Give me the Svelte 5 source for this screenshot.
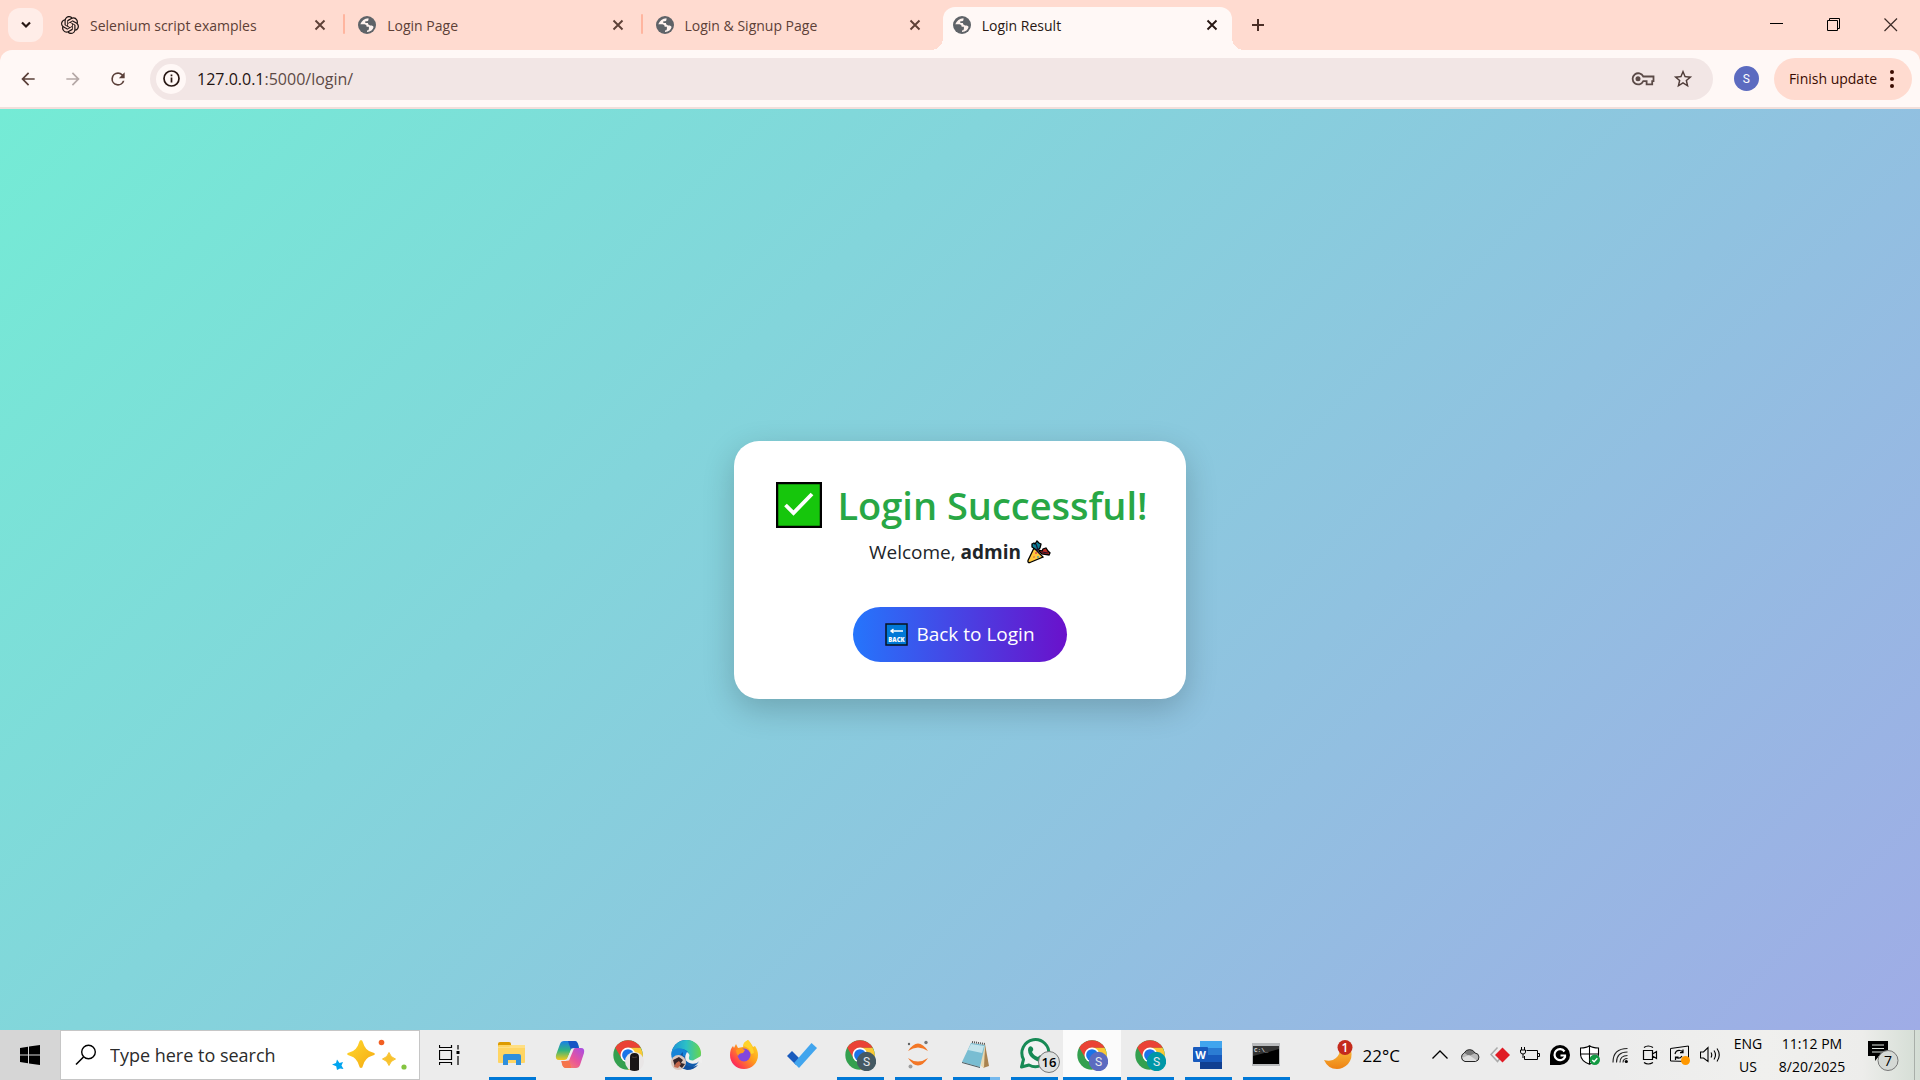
<script>
  const tabs = [
    { title: 'Selenium script examples', icon: 'knot' },
    { title: 'Login Page', icon: 'globe', sep: true },
    { title: 'Login & Signup Page', icon: 'globe', sep: true },
    { title: 'Login Result', icon: 'globe', active: true },
  ];
  const apps = [
    { name: 'File Explorer', art: 'folder', open: true },
    { name: 'Copilot', art: 'copilot' },
    { name: 'Chrome, work profile', art: 'chrome', open: true, badge: 'photo' },
    { name: 'Edge', art: 'edge' },
    { name: 'Firefox', art: 'firefox' },
    { name: 'To Do', art: 'todo' },
    { name: 'Chrome, profile 1', art: 'chrome', open: true, badge: '#455a64' },
    { name: 'Jupyter', art: 'jupyter', open: true },
    { name: 'Notepad', art: 'notepad', open: true, stacked: true },
    { name: 'WhatsApp', art: 'whatsapp', open: true },
    { name: 'Chrome, profile 2', art: 'chrome', open: true, current: true, badge: '#5c6bc0' },
    { name: 'Chrome, profile 3', art: 'chrome', open: true, badge: '#0097a7' },
    { name: 'Word', art: 'word', open: true },
    { name: 'Command Prompt', art: 'cmd', open: true },
  ];
</script>

{#snippet cross()}
  <svg width="12" height="12" viewBox="0 0 12 12"><path d="M1.5 1.5l9 9M10.5 1.5l-9 9" fill="none" stroke="currentColor" stroke-width="1.9" /></svg>
{/snippet}

{#snippet favicon(kind)}
  {#if kind === 'knot'}
    <svg width="18" height="18" viewBox="0 0 24 24" fill="#1b1312"><path d="M22.2819 9.8211a5.9847 5.9847 0 0 0-.5157-4.9108 6.0462 6.0462 0 0 0-6.5098-2.9A6.0651 6.0651 0 0 0 4.9807 4.1818a5.9847 5.9847 0 0 0-3.9977 2.9 6.0462 6.0462 0 0 0 .7427 7.0966 5.98 5.98 0 0 0 .511 4.9107 6.051 6.051 0 0 0 6.5146 2.9001A5.9847 5.9847 0 0 0 13.2599 24a6.0557 6.0557 0 0 0 5.7718-4.2058 5.9894 5.9894 0 0 0 3.9977-2.9001 6.0557 6.0557 0 0 0-.7475-7.0729zm-9.022 12.6081a4.4755 4.4755 0 0 1-2.8764-1.0408l.1419-.0804 4.7783-2.7582a.7948.7948 0 0 0 .3927-.6813v-6.7369l2.02 1.1686a.071.071 0 0 1 .038.052v5.5826a4.504 4.504 0 0 1-4.4945 4.4944zm-9.6607-4.1254a4.4708 4.4708 0 0 1-.5346-3.0137l.142.0852 4.783 2.7582a.7712.7712 0 0 0 .7806 0l5.8428-3.3685v2.3324a.0804.0804 0 0 1-.0332.0615L9.74 19.9502a4.4992 4.4992 0 0 1-6.1408-1.6464zM2.3408 7.8956a4.485 4.485 0 0 1 2.3655-1.9728V11.6a.7664.7664 0 0 0 .3879.6765l5.8144 3.3543-2.0201 1.1685a.0757.0757 0 0 1-.071 0l-4.8303-2.7865A4.504 4.504 0 0 1 2.3408 7.872zm16.5963 3.8558L13.1038 8.364 15.1192 7.2a.0757.0757 0 0 1 .071 0l4.8303 2.7913a4.4944 4.4944 0 0 1-.6765 8.1042v-5.6772a.79.79 0 0 0-.407-.667zm2.0107-3.0231l-.142-.0852-4.7735-2.7818a.7759.7759 0 0 0-.7854 0L9.409 9.2297V6.8974a.0662.0662 0 0 1 .0284-.0615l4.8303-2.7866a4.4992 4.4992 0 0 1 6.6802 4.66zM8.3065 12.863l-2.02-1.1638a.0804.0804 0 0 1-.038-.0567V6.0742a4.4992 4.4992 0 0 1 7.3757-3.4537l-.142.0805L8.704 5.459a.7948.7948 0 0 0-.3927.6813zm1.0976-2.3654l2.602-1.4998 2.6069 1.4998v2.9994l-2.5974 1.4997-2.6067-1.4997Z" /></svg>
  {:else}
    <svg width="18" height="18" viewBox="0 0 18 18"><circle cx="9" cy="9" r="9" fill="#5f6368" /><path d="M10.500 2.200Q4.300 2.800 2.300 8.300h4.200q2.300.2 2.200 2.400h2.200v2.200q-.1 1.500-1.900 1.600v1.500q5.500-.4 6.800-5.500-1.300-.5-1.800-1.600h-2.500q-1.600-.2-1.600-2H7.300V5.200h1.800q1.400-.2 1.400-1.700z" fill="#fff3ef" /><path d="M14.500 5.200q2 2.500 1.500 5.800l-1.500-1.500h-3z" fill="#5f6368" /></svg>
  {/if}
{/snippet}

{#snippet chrome(badge)}
  <svg width="32" height="32" viewBox="0 0 32 32">
    <g transform="translate(1 1) scale(.625)">
      <circle cx="24" cy="24" r="23.500" fill="#34a04f" />
      <path d="M43.700 11.800A23 23 0 0 1 24 47.500L34.200 30 24 12z" fill="#fcc934" />
      <path d="M3.700 12.200A23.500 23.500 0 0 1 44.300 12.200H24L14 30z" fill="#ea4335" />
      <circle cx="24" cy="24" r="12" fill="#fff" />
      <circle cx="24" cy="24" r="9.400" fill="#1a73e8" />
    </g>
    {#if badge === 'photo'}
      <circle cx="22.500" cy="22.500" r="9.500" fill="#e9e6e6" />
      <path d="M18 18q0-4 4.500-4t4.500 4v13q-4.500 2-9 0z" fill="#191516" />
      <path d="M20 18q2 1 5 0" stroke="#4b3f3d" fill="none" />
    {:else}
      <circle cx="22.500" cy="22.500" r="9.700" fill={badge} />
      <text x="22.500" y="27" text-anchor="middle" font-family="Roboto, sans-serif" font-size="12" fill="#e6e9ee">S</text>
    {/if}
  </svg>
{/snippet}

{#snippet appArt(app)}
  {#if app.art === 'chrome'}
    {@render chrome(app.badge)}
  {:else if app.art === 'folder'}
    <svg width="32" height="32" viewBox="0 0 32 32">
      <path d="M2 5q0-2 2-2h9q2 0 2 2v4H2z" fill="#dd9b00" /><rect x="2" y="6" width="27" height="18" rx="1" fill="#ffd563" /><path d="M2 8h11l3-2h13v3H2z" fill="#ffdf83" />
      <path d="M7 26V17q0-2 2-2h14q2 0 2 2v9h-5v-5h-8v5z" fill="#2f8fdd" />
    </svg>
  {:else if app.art === 'copilot'}
    <svg width="32" height="32" viewBox="0 0 32 32">
      <defs>
        <linearGradient id="cpA" x1="0" y1="0" x2="0" y2="1"><stop offset="0" stop-color="#1a7fe8" /><stop offset=".5" stop-color="#31b57e" /><stop offset="1" stop-color="#f4c81c" /></linearGradient>
        <linearGradient id="cpB" x1="1" y1="0" x2="0" y2="1"><stop offset="0" stop-color="#a44de8" /><stop offset=".5" stop-color="#e8559b" /><stop offset="1" stop-color="#ff9357" /></linearGradient>
      </defs>
      <path d="M17 2h4q2 0 3 3l1 4h-5q-2 0-3 2l-3 7q-1 3-4 3H5q-4 0-3-5L6 5q1-3 4-3z" fill="url(#cpA)" />
      <path d="M15 29h-3q-3 0-4-4l-1-3h5q2 0 3-2l3-8q1-3 4-3h5q4 0 3 5l-4 12q-1 3-4 3z" fill="url(#cpB)" />
      <path d="M14 2h7q2 0 3 3l1 4h-5q-2 0-3 2z" fill="#1554c4" /><path d="M8 22h4q2 0 3-2l2 9h-5q-3 0-4-4z" fill="#f5744c" />
      <path d="M17.500 9.500h2.500l-5 12h-2.500z" fill="#ececec" />
    </svg>
  {:else if app.art === 'edge'}
    <svg width="32" height="32" viewBox="0 0 32 32">
      <defs>
        <linearGradient id="edA" x1="0" y1="0" x2="1" y2="0"><stop offset="0" stop-color="#1c93d6" /><stop offset=".5" stop-color="#2cc0c6" /><stop offset="1" stop-color="#68d64c" /></linearGradient>
      </defs>
      <circle cx="16" cy="15.500" r="14.500" fill="#0f5cae" />
      <path d="M1.500 15C2 7 8.500 1 16.500 1 25 1 31 7.500 31 14c0 5-3.500 8-8 8-4 0-6-2-5-3.500 1.600-2.300 1-6.500-4-8C9 9 3 11 1.500 15z" fill="url(#edA)" />
      <path d="M1.500 15C3 9.500 9 8.500 13 10c5 1.700 6 6 4 8.500l-4-2-5 3-6 1z" fill="#1684d8" />
      <path d="M17 13q-5 9 4 11.500 5 1 8-2l3 2v-8l-9 5q-5 0-4-3.500 1.500-2.500-2-5z" fill="#efefef" />
      <path d="M13 13q-2 10 5 14 5 2 10-1-4 5-11 5-8-2-8-10 0-5 4-8z" fill="#104f9e" />
      <circle cx="8.500" cy="23.500" r="7.500" fill="#dcc6bc" /><path d="M3 21l6-3 4 3-2 3 4 1-3 4-4-3-3 2z" fill="#36262a" /><path d="M6 24l3-2 2 3-3 4-4-1z" fill="#c4664a" />
    </svg>
  {:else if app.art === 'firefox'}
    <svg width="32" height="32" viewBox="0 0 32 32">
      <defs>
        <linearGradient id="ffA" x1="1" y1="0" x2="0" y2="1"><stop offset="0" stop-color="#ffe226" /><stop offset=".45" stop-color="#ff9b1c" /><stop offset=".8" stop-color="#ff3750" /><stop offset="1" stop-color="#e31587" /></linearGradient>
      </defs>
      <path d="M20 1c3 3 4 5 5 7l2-1c2 3 3 6 3 9 0 8-6 14-14 14S2 24 2 16c0-4 1-7 3-9l1 2 2-4 2 4 5-1q2-5 5-7z" fill="url(#ffA)" />
      <circle cx="16" cy="16" r="6.500" fill="#8247dd" /><path d="M8 11q5-3 9 0l-2 3q-4 0-5 3-2-3-2-6z" fill="#ff9a1f" /><path d="M15 7q7 1 8 8l3-1q-1-7-6-13-5 2-5 6z" fill="#ffd32c" />
    </svg>
  {:else if app.art === 'todo'}
    <svg width="32" height="32" viewBox="0 0 32 32"><path d="M1 17l5-5 9 9-5 5z" fill="#185abd" /><path d="M8 24L25.500 4l5.500 5-18 20z" fill="#41a5ee" /></svg>
  {:else if app.art === 'jupyter'}
    <svg width="32" height="32" viewBox="0 0 32 32">
      <path d="M6 12q10-15 20 0-10-7-20 0zM6 19q10 15 20 0-10 7-20 0z" fill="#f37726" />
      <circle cx="24" cy="3.500" r="1.700" fill="#767677" /><circle cx="7" cy="5" r="1.200" fill="#616262" /><circle cx="8.500" cy="27.500" r="2" fill="#9e9e9e" />
    </svg>
  {:else if app.art === 'notepad'}
    <svg width="32" height="32" viewBox="0 0 32 32">
      <path d="M25 5l4 22-6 2z" fill="#a98350" /><path d="M22 6l3-1-1 24-3-2z" fill="#e9d8b0" />
      <path d="M11 4l14 2-5 22-18-5z" fill="#79bdd2" /><path d="M11 5l13 2-2 7-14-3z" fill="#c3e4ec" /><path d="M12 3l13 2" stroke="#555" stroke-width="2" stroke-dasharray="1 1" />
      <path d="M2 23l18 5v1L2 24z" fill="#4a5a60" />
    </svg>
  {:else if app.art === 'whatsapp'}
    <svg class="wide" width="46" height="36" viewBox="0 0 46 36">
      <path d="M4.500 30l2-7.500A13.500 13.500 0 1 1 12 28z" fill="#f3f3f3" stroke="#178a55" stroke-width="3" stroke-linejoin="round" />
      <path d="M12 10q2-2 4 1 1 2-1 4 2 4 6 5 2-3 4-1 3 1 1 4-3 3-8 0-7-4-7-10 0-2 1-3z" fill="#178a55" />
      <circle cx="32" cy="25" r="10.500" fill="#dfe2e1" stroke="#777" />
      <text x="32" y="30" text-anchor="middle" font-family="Open Sans, sans-serif" font-size="13" font-weight="600" fill="#000">16</text>
    </svg>
  {:else if app.art === 'word'}
    <svg width="32" height="32" viewBox="0 0 32 32">
      <path d="M8 2h22v7H8z" fill="#41a5ee" /><path d="M8 9h22v7H8z" fill="#2b7cd3" /><path d="M8 16h22v7H8z" fill="#185abd" /><path d="M8 23h22v7H8z" fill="#103f91" />
      <rect x="1" y="8" width="15" height="15" rx="1" fill="#185abd" />
      <text x="8.500" y="20" text-anchor="middle" font-family="Open Sans, sans-serif" font-size="11" font-weight="700" fill="#fff">W</text>
    </svg>
  {:else if app.art === 'cmd'}
    <svg width="32" height="32" viewBox="0 0 32 32">
      <rect x="2" y="4" width="28" height="23" fill="#b9bbbd" /><rect x="3" y="7" width="26" height="18" fill="#000" /><path d="M3 17l26-7v-3H3z" fill="#333" />
      <text x="4" y="13" font-family="Liberation Mono, monospace" font-size="6" font-weight="700" fill="#ddd">C:\_</text>
    </svg>
  {/if}
{/snippet}

<div class="screen">
  <header>
    <div class="strip">
      <button class="tabsearch" aria-label="Search tabs"><svg width="14" height="14" viewBox="0 0 14 14"><path d="M3 4.500l4 4 4-4" fill="none" stroke="#281713" stroke-width="2.200" /></svg></button>
      <nav class="tabs" aria-label="Tabs">
        {#each tabs as tab}
          <div class="tab" class:active={tab.active} class:sep={tab.sep}>
            {@render favicon(tab.icon)}
            <button class="title">{tab.title}</button>
            <button class="close" aria-label={`Close ${tab.title}`}>{@render cross()}</button>
          </div>
        {/each}
      </nav>
      <button class="newtab" aria-label="New tab"><svg width="14" height="14" viewBox="0 0 14 14"><path d="M7 1v12M1 7h12" stroke="#4b2f27" stroke-width="2" /></svg></button>
      <div class="window">
        <button aria-label="Minimize"><svg width="14" height="14" viewBox="0 0 14 14"><path d="M0 5.500h13" stroke="#000" /></svg></button>
        <button aria-label="Restore"><svg width="14" height="14" viewBox="0 0 14 14"><path d="M.5 2.500h10v10H.5zM2.500 2V.500h10v10H11" fill="none" stroke="#000" /></svg></button>
        <button aria-label="Close window"><svg width="14" height="14" viewBox="0 0 14 14"><path d="M.5.500l12.500 12.500M13 .500l-12.500 12.500" stroke="#3c2b27" stroke-width="1.200" /></svg></button>
      </div>
    </div>
    <div class="toolbar">
      <button class="nav" aria-label="Back"><svg width="20" height="20" viewBox="0 0 24 24"><path d="M20 11H7.830l5.590-5.590L12 4l-8 8 8 8 1.410-1.410L7.830 13H20z" fill="#5b4039" /></svg></button>
      <button class="nav" aria-label="Forward" disabled><svg width="20" height="20" viewBox="0 0 24 24"><path d="M12 4l-1.410 1.410L16.170 11H4v2h12.170l-5.580 5.590L12 20l8-8z" fill="#b5a8a6" /></svg></button>
      <button class="nav" aria-label="Reload"><svg width="20" height="20" viewBox="0 0 24 24"><path d="M17.650 6.350A7.960 7.960 0 0 0 12 4a8 8 0 1 0 7.730 10h-2.080A6 6 0 1 1 12 6c1.660 0 3.140.69 4.220 1.780L13 11h7V4z" fill="#5b4039" /></svg></button>
      <form class="omni">
        <button type="button" class="info" aria-label="Site information"><svg width="17" height="17" viewBox="0 0 17 17"><circle cx="8.500" cy="8.500" r="7.500" fill="none" stroke="#281713" stroke-width="1.700" /><path d="M8.500 7.500v5M8.500 4.500v1.800" stroke="#281713" stroke-width="1.700" /></svg></button>
        <div class="url"><b>127.0.0.1</b>:5000/login/</div>
        <button type="button" aria-label="Passwords"><svg width="24" height="16" viewBox="0 0 24 16"><path d="M22.500 5.500H12.300a5.600 5.600 0 1 0 0 4.700h3.300v3.200h5.600v-3.200h1.300z" fill="none" stroke="#5b4a47" stroke-width="1.800" /><circle cx="7" cy="7.800" r="2.500" fill="#5b4a47" /></svg></button>
        <button type="button" aria-label="Bookmark"><svg width="22" height="22" viewBox="0 0 24 24"><path d="M22 9.240l-7.190-.62L12 2 9.190 8.630 2 9.240l5.460 4.730L5.820 21 12 17.270 18.180 21l-1.630-7.030zM12 15.400l-3.760 2.270 1-4.280-3.320-2.880 4.380-.38L12 6.100l1.710 4.040 4.380.38-3.320 2.880 1 4.280z" fill="#4f3c38" /></svg></button>
      </form>
      <button class="avatar" aria-label="Profile">S</button>
      <button class="update">Finish update <svg width="4" height="18" viewBox="0 0 4 18" fill="#3a0b01"><circle cx="2" cy="2" r="2" /><circle cx="2" cy="9" r="2" /><circle cx="2" cy="16" r="2" /></svg></button>
    </div>
  </header>

  <main>
    <section class="card">
      <h1>
        <svg width="46" height="46" viewBox="0 0 46 46"><rect x="1" y="1" width="44" height="44" fill="#16c60c" stroke="#000" stroke-width="2.500" /><path d="M9.500 23l8 8L36 12" fill="none" stroke="#fff" stroke-width="3.800" /></svg>
        Login Successful!
      </h1>
      <p>
        Welcome, <strong>admin</strong>
        <svg width="24" height="24" viewBox="0 0 24 24">
          <path d="M7 8l9 9-13 5.500q-2.500.5-2-2z" fill="#ffc83d" stroke="#000" stroke-width="1.300" />
          <path d="M5 4l2-1 1 1 2-3 2 2 2 1-1 4-2 2-3-1-3-2z" fill="#0d7f98" stroke="#000" stroke-width="1.300" />
          <path d="M12 10l3 1 1-2 3-1 2 3 2 2-1 2-7-1-3-3z" fill="#b8281f" stroke="#000" stroke-width="1.300" />
          <path d="M9 4l2 6M9 9l4 5M15 12l6 1" stroke="#1d1432" stroke-width="1.200" /><circle cx="9" cy="13" r="1" fill="#e74856" /><circle cx="7" cy="17" r="1" fill="#e78a3c" /><circle cx="11" cy="17" r="1" fill="#5aa9a0" />
        </svg>
      </p>
      <a class="back" href="#login">
        <svg width="23" height="23" viewBox="0 0 23 23"><rect x="1" y="1" width="21" height="21" fill="#0078d7" stroke="#08121e" stroke-width="1.500" /><path d="M18 8H6M8.500 6L6 8l2.500 2" fill="none" stroke="#fff" stroke-width="1.400" /><text x="11.500" y="18.500" text-anchor="middle" font-family="Open Sans, sans-serif" font-size="6" font-weight="800" fill="#fff">BACK</text></svg>
        Back to Login
      </a>
    </section>
  </main>

  <footer>
    <button class="start" aria-label="Start"><svg width="20" height="20" viewBox="0 0 20 20"><path d="M0 3l8-1.200v7.700H0zM9 1.600L20 0v9.500H9zM0 10.500h8v7.800L0 17zM9 10.500h11V20L9 18.400z" /></svg></button>
    <label class="search">
      <svg width="22" height="22" viewBox="0 0 22 22"><circle cx="13.500" cy="8" r="6.800" fill="none" stroke="#000" stroke-width="1.400" /><path d="M8.500 13L1 20.500" stroke="#000" stroke-width="1.600" /></svg>
      <input type="text" placeholder="Type here to search" aria-label="Type here to search" />
      <svg width="76" height="32" viewBox="0 0 76 32">
        <defs><linearGradient id="spark" x1="0" y1="0" x2="1" y2="1"><stop offset="0" stop-color="#ffd92c" /><stop offset="1" stop-color="#f5a914" /></linearGradient></defs>
        <path d="M30 1q1.500 0 2 2.500 2 7.500 8.500 9.500 3.500 1 3.500 2t-3.500 2Q34 19 32 26.500q-.5 2.500-2 2.500t-2-2.500Q26 19 19.500 17 16 16 16 15t3.500-2Q26 11 28 3.500 28.500 1 30 1z" fill="url(#spark)" />
        <path d="M58 13.500q1.500 5 6.500 6.500-5 1.500-6.500 6.500-1.500-5-6.500-6.500 5-1.500 6.500-6.500z" fill="#f8c22d" stroke="#f8c22d" />
        <path d="M6 20.500l2.500 3.500 3.500-1-1.500 3.500 2 3.500-3.500-.5L6 31l-.8-3.700L1 25.500l4-1.500z" fill="#00a4ef" />
        <circle cx="50.500" cy="3.500" r="2.800" fill="#f25f22" /><circle cx="73" cy="28" r="2.600" fill="#84c441" />
      </svg>
    </label>
    <button class="taskview" aria-label="Task view"><svg width="21" height="20" viewBox="0 0 21 20"><path d="M.5 0v2.500h12V0M.5 5.500h12v9H.500zM.5 20v-2.500h12V20M19 0v4.500M19 11v9" fill="none" stroke="#000" stroke-width="1.200" /><rect x="17.500" y="6" width="3" height="3" /></svg></button>
    <nav class="apps" aria-label="Taskbar">
      {#each apps as app}
        <button class="app" class:open={app.open} class:current={app.current} class:stacked={app.stacked} aria-label={app.name}>{@render appArt(app)}</button>
      {/each}
    </nav>
    <button class="weather">
      <svg width="30" height="30" viewBox="0 0 30 30">
        <defs><linearGradient id="moon" x1="0" y1="0" x2="0" y2="1"><stop offset="0" stop-color="#f9bb3c" /><stop offset="1" stop-color="#ee8213" /></linearGradient></defs>
        <path d="M0 20q8 2 12-2 4-3 4-10l11 2q2 8-3 14-5 5-11 5-9 0-13-9z" fill="url(#moon)" />
        <circle cx="21" cy="7.500" r="7.500" fill="#c42b1c" /><text x="21" y="12" text-anchor="middle" font-family="Open Sans, sans-serif" font-size="12" font-weight="600" fill="#fff">1</text>
      </svg>
      22°C
    </button>
    <div class="tray">
      <button aria-label="Show hidden icons"><svg width="20" height="20" viewBox="0 0 20 20"><path d="M2.500 13.500L10 6l7.500 7.500" fill="none" stroke="#000" stroke-width="1.300" /></svg></button>
      <button aria-label="OneDrive"><svg width="20" height="20" viewBox="0 0 20 20"><path d="M5 16.500a4.500 4.500 0 0 1-.8-8.500A6 6 0 0 1 15 8a4.300 4.300 0 0 1 .5 8.500z" fill="#b9b9b9" /><path d="M4.500 8A6 6 0 0 1 15 8.300L9 11z" fill="#777" /><path d="M1 13.500L9 10l8 5.500-2 1H5z" fill="#dedede" /><path d="M5 16.500a4.500 4.500 0 0 1-.8-8.500A6 6 0 0 1 15 8a4.300 4.300 0 0 1 .5 8.500z" fill="none" stroke="#222" /></svg></button>
      <button aria-label="Remote desktop"><svg width="20" height="20" viewBox="0 0 20 20"><path d="M7.500 2.500L1 9.500l6.500 7 4-5" fill="none" stroke="#aaa" stroke-width="1.500" /><path d="M12.500 2.500l7.500 7.500-7.500 7.500L5 10z" fill="#e01b24" /></svg></button>
      <button aria-label="Battery"><svg width="20" height="20" viewBox="0 0 20 20"><path d="M6.500 5.500h11v9H4.500V11M17.500 8.500h2v3h-2M1.500 2v3M4.500 2v3M.5 5h5v2q0 2-2.500 2T.5 7zM3 9v4" fill="none" stroke="#000" /></svg></button>
      <button aria-label="Grammarly"><svg width="20" height="20" viewBox="0 0 20 20"><path d="M0 20V10A10 10 0 1 1 10 20z" /><path d="M14.500 6.500A5.500 5.500 0 1 0 15 12v-1.500h-4.500" fill="none" stroke="#fff" stroke-width="2.200" /></svg></button>
      <button aria-label="Windows Security"><svg width="20" height="20" viewBox="0 0 20 20"><path d="M9.500.8q3 2.200 9 2.200v6q0 7-9 10.200Q.5 16 .5 9V3q6 0 9-2.200zM9.500 1v18M.5 9h18" fill="#fff" stroke="#000" stroke-width="1.100" /><circle cx="14.800" cy="14.800" r="5.200" fill="#139a43" /><path d="M12.300 15l1.800 1.800 3.200-3.500" fill="none" stroke="#fff" stroke-width="1.400" /></svg></button>
      <button aria-label="Network"><svg width="20" height="20" viewBox="0 0 20 20"><path d="M3 17.500Q3 3.500 17.500 3.500M6.500 17.500q0-10.500 11-10.500M10 17.500q0-7 7.500-7M13 17.500q0-4 4.500-4" fill="none" stroke="#222" stroke-width="1.100" /><circle cx="16.300" cy="16.500" r="1.600" /></svg></button>
      <button aria-label="Meet now"><svg width="20" height="20" viewBox="0 0 20 20"><path d="M3.500 5.500h9v9h-9zM12.500 9l4-2.500v7l-4-2.500M4 2.500q4-3 9 0M4 17.500q4 3 9 0" fill="none" stroke="#000" stroke-width="1.200" /></svg></button>
      <button aria-label="Update status"><svg width="20" height="20" viewBox="0 0 20 20"><path d="M.5 3.500l18-2.500v15.500L.5 16z" fill="none" stroke="#000" /><path d="M5 9q1-4 5-3.500 2 0 3 2M13 4.500v3.200h-3M12 11q-2 3.500-6.500 1.500M5.500 15v-3h3" fill="none" stroke="#000" stroke-width="1.200" /><circle cx="15.500" cy="15.500" r="4.500" fill="#ff9800" /></svg></button>
      <button aria-label="Volume"><svg width="20" height="20" viewBox="0 0 20 20"><path d="M.5 7h3L8 2.500v14L3.500 13h-3zM11 7.500q1.500 2.500 0 5M14 5.500q3 4.500 0 9M17 3.500q4.500 6.500 0 13" fill="none" stroke="#000" stroke-width="1.100" /></svg></button>
    </div>
    <button class="stack lang"><span>ENG</span><span>US</span></button>
    <button class="stack clock"><span>11:12 PM</span><span>8/20/2025</span></button>
    <button class="notes" aria-label="Notifications"><svg width="32" height="32" viewBox="0 0 32 32"><path d="M0 2h20v15h-9l-4 5v-5H0z" /><path d="M4 6h12M4 9.500h12M4 13h12" stroke="#dfe6df" /><circle cx="20" cy="21.500" r="10" fill="#d5d9d5" stroke="#777" /><text x="20" y="26.500" text-anchor="middle" font-family="Open Sans, sans-serif" font-size="14" fill="#000">7</text></svg></button>
  </footer>
</div>

<style>
  :global(body) { margin: 0; }
  .screen {
    min-height: 100vh; display: flex; flex-direction: column; overflow: hidden;
    font-family: 'Open Sans', 'Noto Sans', sans-serif; font-size: 14px; color: #212529;
  }
  button {
    border: 0; padding: 0; margin: 0; background: none; font: inherit; color: inherit;
    display: flex; align-items: center; justify-content: center;
  }
  svg { display: block; flex: none; }

  header { background: #ffdbd0; }
  .strip { display: flex; align-items: center; height: 50px; padding: 0 1px 0 8px; }
  .tabsearch { width: 35px; height: 34px; border-radius: 12px; background: #ffede8; }
  .tabs { display: flex; align-self: stretch; gap: 8px; margin-left: 8px; padding-top: 7px; flex: 0 1 1181px; min-width: 0; }
  .tab { position: relative; flex: 1 1 0; min-width: 0; display: flex; align-items: center; padding: 0 10px 7px; color: #5d4037; }
  .tab .title { flex: 1; min-width: 0; justify-content: flex-start; padding-left: 11px; white-space: nowrap; }
  .close { width: 20px; height: 20px; color: #5d4037; }
  .sep::before { content: ''; position: absolute; left: -5px; top: 7px; width: 2px; height: 20px; border-radius: 1px; background: #ffb59f; }
  .active { background: #fff8f6; border-radius: 12px 12px 0 0; color: #281713; }
  .active .close { color: #281713; }
  .active::before, .active::after { content: ''; position: absolute; bottom: 0; width: 12px; height: 12px; }
  .active::before { left: -12px; background: radial-gradient(circle at 0 0, transparent 12px, #fff8f6 12px); }
  .active::after { right: -12px; background: radial-gradient(circle at 100% 0, transparent 12px, #fff8f6 12px); }
  .newtab { width: 35px; height: 34px; margin-left: 8px; }
  .window { display: flex; margin-left: auto; align-self: stretch; }
  .window button { width: 57px; }

  .toolbar {
    display: flex; align-items: center; height: 57px; padding: 0 8px 0 5px;
    background: #fff8f6; border-radius: 12px 12px 0 0; border-bottom: 2px solid #f2dfdb;
  }
  .nav { width: 45px; height: 40px; }
  .omni { flex: 1; display: flex; align-items: center; height: 42px; margin-left: 10px; border-radius: 21px; background: #f2e6e5; padding: 0 10px 0 6px; }
  .omni button { width: 40px; height: 30px; }
  .omni .info { width: 30px; border-radius: 50%; background: #fff8f6; }
  .url { flex: 1; margin-left: 11px; font-size: 16px; color: #5d4a46; }
  .url b { font-weight: 400; color: #1f1412; }
  .avatar { width: 25px; height: 25px; margin: 0 15px 0 21px; border-radius: 50%; background: #5c6bc0; color: #fff; font-size: 12px; font-family: Roboto, sans-serif; }
  .update { height: 42px; padding: 0 18px 0 15px; gap: 13px; border-radius: 21px; background: #ffdbd0; color: #3a0b01; white-space: nowrap; }

  main { flex: 1; display: flex; align-items: center; justify-content: center; background: linear-gradient(135deg, #74ebd5, #9face6); }
  .card {
    display: flex; flex-direction: column; align-items: center; padding: 40px 38px 37px;
    background: #fff; border-radius: 25px; box-shadow: 0 10px 32px rgba(0, 0, 0, .2);
  }
  h1 { display: flex; align-items: center; gap: 15px; margin: 0 0 8px; padding-left: 4px; font-size: 38px; line-height: 48px; font-weight: 600; color: #28a745; white-space: nowrap; }
  p { display: flex; align-items: center; margin: 0 0 40px; font-size: 19px; line-height: 30px; white-space: pre; }
  strong { margin: 0 6px 0 0; }
  .back {
    display: flex; align-items: center; gap: 8px; height: 55px; padding: 0 32px; border-radius: 28px;
    background: linear-gradient(90deg, #2575fc, #6a11cb); color: #fff; font-size: 19px; text-decoration: none; white-space: nowrap;
  }

  footer { display: flex; height: 50px; color: #000; background: linear-gradient(90deg, #ececec 0 84%, #f0f0ee 92%, #ededeb 97%, #d4ddd4); }
  .start { width: 60px; background: #d6d6d6; }
  .search { display: flex; align-items: center; width: 360px; box-sizing: border-box; padding: 0 12px 0 14px; background: #fff; border: 1px solid #c6c6c6; }
  .search input { flex: 1; min-width: 0; margin-left: 13px; padding: 0; border: 0; outline: 0; background: none; font: inherit; font-size: 18px; }
  .search input::placeholder { color: #2b2b2b; opacity: 1; }
  .taskview { width: 59px; }
  .apps { display: grid; grid-template-columns: repeat(14, 1fr); flex: 0 1 812px; margin-left: 4px; }
  .app { position: relative; }
  .app .wide { margin-left: 11px; }
  .current { background: #fbfbfb; }
  .open::after { content: ''; position: absolute; left: 6px; right: 5px; bottom: 0; height: 3px; background: #0078d7; }
  .current::after { left: 0; right: 0; }
  .stacked::after { background: linear-gradient(90deg, #0078d7 37px, #76b9ed 37px); }
  .weather { margin-left: auto; gap: 9px; font-size: 17px; }
  .tray { display: grid; grid-template-columns: repeat(10, 30px); margin-left: 25px; }
  .stack { flex-direction: column; line-height: 23px; }
  .lang { width: 46px; }
  .clock { width: 82px; }
  .notes { width: 62px; margin-right: 5px; border-right: 1px solid #a9afa9; }
</style>
